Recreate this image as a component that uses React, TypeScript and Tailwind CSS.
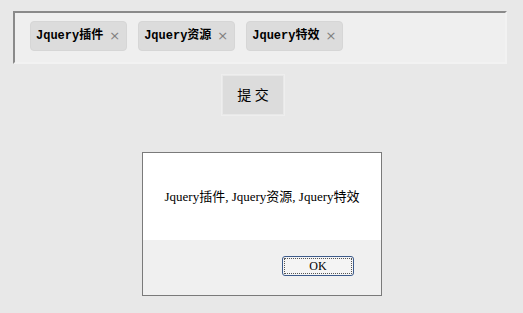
import React from "react";

const serif = '"Liberation Serif", "Noto Sans CJK SC", serif';
const mono = '"Liberation Mono", "Noto Sans CJK SC", monospace';

function Tag({ label }: { label: string }) {
  return (
    <div className="flex h-[30px] items-center rounded-[4px] border border-[#d6d6d6] bg-[#dcdcdc] pl-[5px] pr-[6px]">
      <span className="text-[12px] font-bold text-black" style={{ fontFamily: mono }}>{label}</span>
      <span className="ml-[6px] text-[13px] text-[#808080]" style={{ fontFamily: '"DejaVu Sans", sans-serif' }}>×</span>
    </div>
  );
}

export default function App() {
  return (
    <div className="h-[313px] w-[523px] overflow-hidden bg-[#e8e8e8] pt-[11px]" style={{ fontFamily: serif }}>
      <div className="ml-[13px] flex h-[53px] w-[494px] items-start gap-[11px] border-2 border-b-[#f2f2f2] border-l-[#8a8a8a] border-r-[#f2f2f2] border-t-[#8a8a8a] bg-[#efefef] pl-[15px] pt-[8px]">
        <Tag label="Jquery插件" />
        <Tag label="Jquery资源" />
        <Tag label="Jquery特效" />
      </div>
      <div className="ml-[221px] mt-[10px] w-[64px] border border-[#eeeeee] p-[1px]">
        <div className="flex h-[38px] items-center justify-center bg-[#dcdcdc] text-[14px] text-black">提 交</div>
      </div>
      <div className="ml-[142px] mt-[36px] flex h-[144px] w-[240px] flex-col border border-[#7a7a7a] bg-[#f0f0f0]">
        <div className="flex h-[87px] items-center justify-center bg-white text-[13px] text-black">
          Jquery插件, Jquery资源, Jquery特效
        </div>
        <div className="flex flex-1 items-start justify-end pr-[27px] pt-[16px]">
          <div className="flex h-[20px] w-[72px] items-center justify-center rounded-[3px] border border-[#3c5a8a] bg-[#f4f4f4] p-[1px]">
            <div className="flex h-full w-full items-center justify-center border border-dotted border-[#555] text-[12px] text-black">OK</div>
          </div>
        </div>
      </div>
    </div>
  );
}
